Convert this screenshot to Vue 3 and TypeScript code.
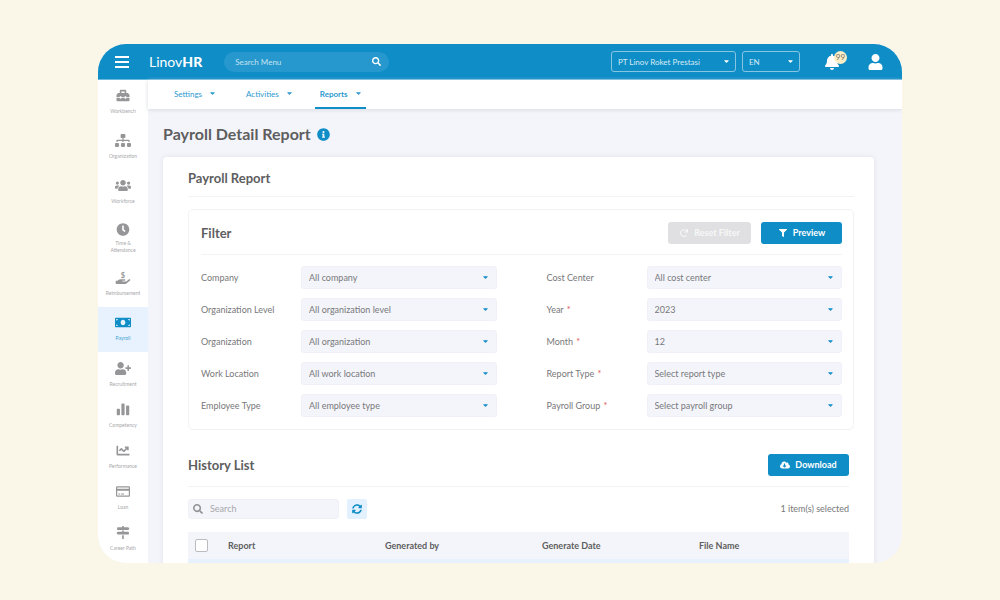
<script setup lang="ts">
import { ref } from 'vue'

interface Glyph {
  box: string
  d: string
}

interface MenuItem {
  label: string
  icon: string
  active?: boolean
  size?: 'tall' | 'compact'
}

interface Field {
  id: string
  label: string
  value: string
  required?: boolean
}

const glyphs: Record<string, Glyph> = {
  toolbox: {
    box: '0 0 512 512',
    d: 'M502.63 214.63l-45.25-45.25c-6-6-14.14-9.37-22.63-9.37H384V80c0-26.51-21.49-48-48-48H176c-26.51 0-48 21.49-48 48v80H77.25c-8.49 0-16.62 3.37-22.63 9.37L9.37 214.63c-6 6-9.37 14.14-9.37 22.63V320h128v-16c0-8.84 7.16-16 16-16h32c8.84 0 16 7.16 16 16v16h128v-16c0-8.84 7.16-16 16-16h32c8.84 0 16 7.16 16 16v16h128v-82.75c0-8.48-3.37-16.62-9.37-22.62zM320 160H192V96h128v64zm64 208c0 8.84-7.16 16-16 16h-32c-8.84 0-16-7.16-16-16v-16H192v16c0 8.84-7.16 16-16 16h-32c-8.84 0-16-7.16-16-16v-16H0v96c0 17.67 14.33 32 32 32h448c17.67 0 32-14.33 32-32v-96H384v16z',
  },
  sitemap: {
    box: '0 0 640 512',
    d: 'M128 352H32c-17.67 0-32 14.33-32 32v96c0 17.67 14.33 32 32 32h96c17.67 0 32-14.33 32-32v-96c0-17.67-14.33-32-32-32zm-24-80h192v48h48v-48h192v48h48v-57.59c0-21.17-17.23-38.41-38.41-38.41H344v-64h40c17.67 0 32-14.33 32-32V32c0-17.67-14.33-32-32-32H256c-17.67 0-32 14.33-32 32v96c0 17.67 14.33 32 32 32h40v64H94.41C73.23 224 56 241.23 56 262.41V320h48v-48zm264 80h-96c-17.67 0-32 14.33-32 32v96c0 17.67 14.33 32 32 32h96c17.67 0 32-14.33 32-32v-96c0-17.67-14.33-32-32-32zm240 0h-96c-17.67 0-32 14.33-32 32v96c0 17.67 14.33 32 32 32h96c17.67 0 32-14.33 32-32v-96c0-17.67-14.33-32-32-32z',
  },
  users: {
    box: '0 0 640 512',
    d: 'M96 224c35.3 0 64-28.7 64-64s-28.7-64-64-64-64 28.7-64 64 28.7 64 64 64zm448 0c35.3 0 64-28.7 64-64s-28.7-64-64-64-64 28.7-64 64 28.7 64 64 64zm32 32h-64c-17.6 0-33.5 7.1-45.1 18.6 40.3 22.1 68.9 62 75.1 109.4h66c17.7 0 32-14.3 32-32v-32c0-35.3-28.7-64-64-64zm-256 0c61.9 0 112-50.1 112-112S381.9 32 320 32 208 82.1 208 144s50.1 112 112 112zm76.8 32h-8.3c-20.8 10-43.9 16-68.5 16s-47.6-6-68.5-16h-8.3C179.6 288 128 339.6 128 403.2V432c0 26.5 21.5 48 48 48h288c26.5 0 48-21.5 48-48v-28.8c0-63.6-51.6-115.2-115.2-115.2zm-223.7-13.4C161.5 263.1 145.6 256 128 256H64c-35.3 0-64 28.7-64 64v32c0 17.7 14.3 32 32 32h65.9c6.3-47.4 34.9-87.3 75.2-109.4z',
  },
  clock: {
    box: '0 0 512 512',
    d: 'M256,8C119,8,8,119,8,256S119,504,256,504,504,393,504,256,393,8,256,8Zm92.49,313h0l-20,25a16,16,0,0,1-22.49,2.5h0l-67-49.72a40,40,0,0,1-15-31.23V112a16,16,0,0,1,16-16h32a16,16,0,0,1,16,16V256l58,42.5A16,16,0,0,1,348.49,321Z',
  },
  hand: {
    box: '0 0 576 512',
    d: 'M565.3 328.1c-11.8-10.7-30.2-10-42.6 0L430.3 402c-11.3 9.1-25.4 14-40 14H272c-8.8 0-16-7.2-16-16s7.2-16 16-16h78.3c15.9 0 30.7-10.9 33.3-26.6 3.3-20-12.1-37.4-31.6-37.4H192c-27 0-53.1 9.3-74.1 26.3L71.4 384H16c-8.8 0-16 7.2-16 16v96c0 8.8 7.2 16 16 16h356.8c14.5 0 28.6-4.9 40-14L564 377c15.2-12.1 16.4-35.3 1.3-48.9z',
  },
  money: {
    box: '0 0 640 512',
    d: 'M32 64H608a32 32 0 0 1 32 32V416a32 32 0 0 1-32 32H32a32 32 0 0 1-32-32V96a32 32 0 0 1 32-32zM320 144c-53 0-96 50-96 112s43 112 96 112 96-50 96-112-43-112-96-112zM48 176a64 64 0 0 0 64-64H48zM592 176v-64h-64a64 64 0 0 0 64 64zM48 336v64h64a64 64 0 0 0-64-64zM592 336a64 64 0 0 0-64 64h64z',
  },
  userPlus: {
    box: '0 0 640 512',
    d: 'M624 208h-64v-64c0-8.8-7.2-16-16-16h-32c-8.8 0-16 7.2-16 16v64h-64c-8.8 0-16 7.2-16 16v32c0 8.8 7.2 16 16 16h64v64c0 8.8 7.2 16 16 16h32c8.8 0 16-7.2 16-16v-64h64c8.8 0 16-7.2 16-16v-32c0-8.8-7.2-16-16-16zm-400 48c70.7 0 128-57.3 128-128S294.7 0 224 0 96 57.3 96 128s57.3 128 128 128zm89.6 32h-16.7c-22.2 10.2-46.9 16-72.9 16s-50.6-5.8-72.9-16h-16.7C60.2 288 0 348.2 0 422.4V464c0 26.5 21.5 48 48 48h352c26.5 0 48-21.5 48-48v-41.6c0-74.2-60.2-134.4-134.4-134.4z',
  },
  bars3: {
    box: '0 0 512 512',
    d: 'M40 224h66a30 30 0 0 1 30 30v196a30 30 0 0 1-30 30H40a30 30 0 0 1-30-30V254a30 30 0 0 1 30-30zM223 16h66a30 30 0 0 1 30 30v404a30 30 0 0 1-30 30h-66a30 30 0 0 1-30-30V46a30 30 0 0 1 30-30zM406 96h66a30 30 0 0 1 30 30v324a30 30 0 0 1-30 30h-66a30 30 0 0 1-30-30V126a30 30 0 0 1 30-30z',
  },
  chart: {
    box: '0 0 512 512',
    d: 'M496 384H64V80c0-8.84-7.16-16-16-16H16C7.16 64 0 71.16 0 80v336c0 17.67 14.33 32 32 32h464c8.84 0 16-7.16 16-16v-32c0-8.84-7.16-16-16-16zM464 96H345.94c-21.38 0-32.09 25.85-16.97 40.97l32.4 32.4L288 242.75l-73.37-73.37c-12.5-12.5-32.76-12.5-45.25 0l-68.69 68.69c-6.25 6.25-6.25 16.38 0 22.63l22.62 22.62c6.25 6.25 16.38 6.25 22.63 0L192 237.25l73.37 73.37c12.5 12.5 32.76 12.5 45.25 0l96-96 32.4 32.4c15.12 15.12 40.97 4.41 40.97-16.97V112c.01-8.84-7.15-16-15.99-16z',
  },
  card: {
    box: '0 0 640 512',
    d: 'M88 48H552a48 48 0 0 1 48 48V416a48 48 0 0 1-48 48H88a48 48 0 0 1-48-48V96a48 48 0 0 1 48-48zM88 96v48H552V96zM88 224V416H552V224zM136 336h72v40h-72zM244 336h120v40H244z',
  },
  signs: {
    box: '0 0 512 512',
    d: 'M224 0h64v48h176l48 56-48 56H48a24 24 0 0 1-24-24V72a24 24 0 0 1 24-24h176zM224 176h64v48h176a24 24 0 0 1 24 24v64a24 24 0 0 1-24 24H48l-48-56 48-56h176zM224 360h64v128a24 24 0 0 1-24 24h-16a24 24 0 0 1-24-24z',
  },
  search: {
    box: '0 0 512 512',
    d: 'M505 442.7L405.3 343c-4.5-4.5-10.6-7-17-7H372c27.6-35.3 44-79.7 44-128C416 93.1 322.9 0 208 0S0 93.1 0 208s93.1 208 208 208c48.3 0 92.7-16.4 128-44v16.3c0 6.4 2.5 12.5 7 17l99.7 99.7c9.4 9.4 24.6 9.4 33.9 0l28.3-28.3c9.4-9.4 9.4-24.6.1-34zM208 336c-70.7 0-128-57.2-128-128 0-70.7 57.2-128 128-128 70.7 0 128 57.2 128 128 0 70.7-57.2 128-128 128z',
  },
  bell: {
    box: '0 0 448 512',
    d: 'M224 512c35.32 0 63.97-28.65 63.97-64H160.03c0 35.35 28.65 64 63.97 64zm215.39-149.71c-19.32-20.76-55.47-51.99-55.47-154.29 0-77.7-54.48-139.9-127.94-155.16V32c0-17.67-14.32-32-31.98-32s-31.98 14.33-31.98 32v20.84C118.56 68.1 64.08 130.3 64.08 208c0 102.3-36.15 133.53-55.47 154.29-6 6.45-8.66 14.16-8.61 21.71.11 16.4 12.98 32 32.1 32h383.8c19.12 0 32-15.6 32.1-32 .05-7.55-2.61-15.27-8.61-21.71z',
  },
  user: {
    box: '0 0 448 512',
    d: 'M224 256c70.7 0 128-57.3 128-128S294.7 0 224 0 96 57.3 96 128s57.3 128 128 128zm89.6 32h-16.7c-22.2 10.2-46.9 16-72.9 16s-50.6-5.8-72.9-16h-16.7C60.2 288 0 348.2 0 422.4V464c0 26.5 21.5 48 48 48h352c26.5 0 48-21.5 48-48v-41.6c0-74.2-60.2-134.4-134.4-134.4z',
  },
  caret: {
    box: '0 180 320 192',
    d: 'M31.3 192h257.3c17.8 0 26.7 21.5 14.1 34.1L174.1 354.8c-7.8 7.8-20.5 7.8-28.3 0L17.2 226.1C4.6 213.5 13.5 192 31.3 192z',
  },
  filter: {
    box: '0 0 512 512',
    d: 'M487.976 0H24.028C2.71 0-8.047 25.866 7.058 40.971L192 225.941V432c0 7.831 3.821 15.17 10.237 19.662l80 55.98C298.02 518.69 320 507.493 320 487.98V225.941l184.947-184.97C520.021 25.896 509.338 0 487.976 0z',
  },
  redo: {
    box: '0 0 512 512',
    d: 'M500.33 0h-47.41a12 12 0 0 0-12 12.57l4 82.76A247.42 247.42 0 0 0 256 8C119.34 8 7.9 119.53 8 256.19 8.1 393.07 119.1 504 256 504a247.1 247.1 0 0 0 166.18-63.91 12 12 0 0 0 .48-17.43l-34-34a12 12 0 0 0-16.38-.55A176 176 0 1 1 402.1 157.8l-101.53-4.87a12 12 0 0 0-12.57 12v47.41a12 12 0 0 0 12 12h200.33a12 12 0 0 0 12-12V12a12 12 0 0 0-12-12z',
  },
  sync: {
    box: '0 0 512 512',
    d: 'M370.72 133.28C339.458 104.008 298.888 87.962 255.848 88c-77.458.068-144.328 53.178-162.791 126.85-1.344 5.363-6.122 9.15-11.651 9.15H24.103c-7.498 0-13.194-6.807-11.807-14.176C33.933 94.924 134.813 8 256 8c66.448 0 126.791 26.136 171.315 68.685L463.03 40.97C478.149 25.851 504 36.559 504 57.941V192c0 13.255-10.745 24-24 24H345.941c-21.382 0-32.09-25.851-16.971-40.971l41.75-41.749zM32 296h134.059c21.382 0 32.09 25.851 16.971 40.971l-41.75 41.75c31.262 29.273 71.835 45.319 114.876 45.28 77.418-.07 144.315-53.144 162.787-126.849 1.344-5.363 6.122-9.15 11.651-9.15h57.304c7.498 0 13.194 6.807 11.807 14.176C478.067 417.076 377.187 504 256 504c-66.448 0-126.791-26.136-171.315-68.685L48.97 471.03C33.851 486.149 8 475.441 8 454.059V320c0-13.255 10.745-24 24-24z',
  },
  cloud: {
    box: '0 0 640 512',
    d: 'M537.6 226.6c4.1-10.7 6.4-22.4 6.4-34.6 0-53-43-96-96-96-19.7 0-38.1 6-53.3 16.2C367 64.2 315.3 32 256 32c-88.4 0-160 71.6-160 160 0 2.7.1 5.4.2 8.1C40.2 219.8 0 273.2 0 336c0 79.5 64.5 144 144 144h368c70.7 0 128-57.3 128-128 0-61.9-44-113.6-102.4-125.4zm-132.9 88.7L299.3 420.7c-6.2 6.2-16.4 6.2-22.6 0L171.3 315.3c-10.1-10.1-2.9-27.3 11.3-27.3H248V176c0-8.8 7.2-16 16-16h48c8.8 0 16 7.2 16 16v112h65.4c14.2 0 21.4 17.2 11.3 27.3z',
  },
  info: {
    box: '0 0 512 512',
    d: 'M256 8C119.043 8 8 119.083 8 256c0 136.997 111.043 248 248 248s248-111.003 248-248C504 119.083 392.957 8 256 8zm0 110c23.196 0 42 18.804 42 42s-18.804 42-42 42-42-18.804-42-42 18.804-42 42-42zm56 254c0 6.627-5.373 12-12 12h-88c-6.627 0-12-5.373-12-12v-24c0-6.627 5.373-12 12-12h12v-64h-12c-6.627 0-12-5.373-12-12v-24c0-6.627 5.373-12 12-12h64c6.627 0 12 5.373 12 12v100h12c6.627 0 12 5.373 12 12v24z',
  },
}

const menu: MenuItem[] = [
  { label: 'Workbench', icon: 'toolbox' },
  { label: 'Organization', icon: 'sitemap' },
  { label: 'Workforce', icon: 'users' },
  { label: 'Time & Attendance', icon: 'clock', size: 'tall' },
  { label: 'Reimbursement', icon: 'hand' },
  { label: 'Payroll', icon: 'money', active: true },
  { label: 'Recruitment', icon: 'userPlus', size: 'compact' },
  { label: 'Competency', icon: 'bars3', size: 'compact' },
  { label: 'Performance', icon: 'chart', size: 'compact' },
  { label: 'Loan', icon: 'card', size: 'compact' },
  { label: 'Career Path', icon: 'signs', size: 'compact' },
]

const tabs = ['Settings', 'Activities', 'Reports']

const fields: Field[] = [
  { id: 'company', label: 'Company', value: 'All company' },
  { id: 'cost-center', label: 'Cost Center', value: 'All cost center' },
  { id: 'org-level', label: 'Organization Level', value: 'All organization level' },
  { id: 'year', label: 'Year', value: '2023', required: true },
  { id: 'organization', label: 'Organization', value: 'All organization' },
  { id: 'month', label: 'Month', value: '12', required: true },
  { id: 'location', label: 'Work Location', value: 'All work location' },
  { id: 'report-type', label: 'Report Type', value: 'Select report type', required: true },
  { id: 'employee-type', label: 'Employee Type', value: 'All employee type' },
  { id: 'payroll-group', label: 'Payroll Group', value: 'Select payroll group', required: true },
]

const columns = ['Report', 'Generated by', 'Generate Date', 'File Name']

const menuQuery = ref('')
const historyQuery = ref('')
const allSelected = ref(false)
</script>

<template>
  <div class="page">
    <div class="window">
      <header class="topbar">
        <button class="bare burger" type="button" aria-label="Toggle menu">
          <svg viewBox="0 0 14 12"><path d="M0 0h14v2H0zM0 5h14v2H0zM0 10h14v2H0z" /></svg>
        </button>
        <a class="brand" href="#">Linov<b>HR</b></a>
        <div class="menu-search">
          <input v-model="menuQuery" type="text" placeholder="Search Menu" aria-label="Search Menu" />
          <svg :viewBox="glyphs.search.box"><path :d="glyphs.search.d" /></svg>
        </div>
        <div class="picker tenant">
          <select aria-label="Company account"><option>PT Linov Roket Prestasi</option></select>
          <svg class="caret" :viewBox="glyphs.caret.box"><path :d="glyphs.caret.d" /></svg>
        </div>
        <div class="picker language">
          <select aria-label="Language"><option>EN</option></select>
          <svg class="caret" :viewBox="glyphs.caret.box"><path :d="glyphs.caret.d" /></svg>
        </div>
        <button class="bare bell" type="button" aria-label="Notifications">
          <svg :viewBox="glyphs.bell.box"><path :d="glyphs.bell.d" /></svg>
          <span class="badge">99</span>
        </button>
        <button class="bare account" type="button" aria-label="Account">
          <svg :viewBox="glyphs.user.box"><path :d="glyphs.user.d" /></svg>
        </button>
      </header>

      <div class="body">
        <nav class="sidebar" aria-label="Modules">
          <a
            v-for="item in menu"
            :key="item.label"
            href="#"
            class="module"
            :class="[item.size, { active: item.active }]"
          >
            <svg :viewBox="glyphs[item.icon].box">
              <path :d="glyphs[item.icon].d" fill-rule="evenodd" />
              <text v-if="item.icon === 'hand'" x="288" y="260" text-anchor="middle">$</text>
            </svg>
            <span>{{ item.label }}</span>
          </a>
        </nav>

        <div class="content">
          <nav class="tabs" aria-label="Payroll sections">
            <a v-for="tab in tabs" :key="tab" href="#" class="tab" :class="{ current: tab === 'Reports' }">
              {{ tab }}
              <svg class="caret" :viewBox="glyphs.caret.box"><path :d="glyphs.caret.d" /></svg>
            </a>
          </nav>

          <main class="main">
            <h1>
              Payroll Detail Report
              <svg :viewBox="glyphs.info.box"><path :d="glyphs.info.d" /></svg>
            </h1>

            <div class="card">
              <h2 class="card-title">Payroll Report</h2>

              <section class="filter">
                <div class="section-head">
                  <h2>Filter</h2>
                  <div class="actions">
                    <button class="btn" type="button" disabled>
                      <svg :viewBox="glyphs.redo.box"><path :d="glyphs.redo.d" /></svg>Reset Filter
                    </button>
                    <button class="btn" type="button">
                      <svg :viewBox="glyphs.filter.box"><path :d="glyphs.filter.d" /></svg>Preview
                    </button>
                  </div>
                </div>
                <div class="fields">
                  <div v-for="field in fields" :key="field.id" class="field">
                    <label :for="field.id">{{ field.label }} <i v-if="field.required">*</i></label>
                    <div class="picker">
                      <select :id="field.id"><option>{{ field.value }}</option></select>
                      <svg class="caret" :viewBox="glyphs.caret.box"><path :d="glyphs.caret.d" /></svg>
                    </div>
                  </div>
                </div>
              </section>

              <section class="history">
                <div class="section-head">
                  <h2>History List</h2>
                  <button class="btn" type="button">
                    <svg :viewBox="glyphs.cloud.box"><path :d="glyphs.cloud.d" /></svg>Download
                  </button>
                </div>
                <div class="tools">
                  <div class="list-search">
                    <svg :viewBox="glyphs.search.box"><path :d="glyphs.search.d" /></svg>
                    <input v-model="historyQuery" type="text" placeholder="Search" aria-label="Search history" />
                  </div>
                  <button class="bare refresh" type="button" aria-label="Refresh">
                    <svg :viewBox="glyphs.sync.box"><path :d="glyphs.sync.d" /></svg>
                  </button>
                  <span class="selected">1 item(s) selected</span>
                </div>
                <table>
                  <thead>
                    <tr>
                      <th class="tick"><input v-model="allSelected" type="checkbox" aria-label="Select all" /></th>
                      <th v-for="column in columns" :key="column">{{ column }}</th>
                    </tr>
                  </thead>
                  <tbody>
                    <tr><td colspan="5"></td></tr>
                  </tbody>
                </table>
              </section>
            </div>
          </main>
        </div>
      </div>
    </div>
  </div>
</template>

<style>
body {
  margin: 0;
}
</style>

<style scoped>
* {
  box-sizing: border-box;
}

.page {
  height: 100vh;
  padding: 44px 98px 37px;
  background: #fbf7e8;
  color: #5e5e60;
  font-family: Lato, 'Open Sans', sans-serif;
  font-size: 9px;
  line-height: 12px;
}

.window {
  display: flex;
  flex-direction: column;
  height: 100%;
  overflow: hidden;
  border-radius: 28px;
  background: #f4f5fa;
}

svg {
  display: block;
  flex: none;
  fill: currentColor;
}

a {
  color: inherit;
  text-decoration: none;
}

button,
input,
select {
  margin: 0;
  color: inherit;
  font: inherit;
}

h1,
h2 {
  margin: 0;
  font-weight: 700;
}

h2 {
  font-size: 13px;
  line-height: 18px;
}

.bare {
  display: grid;
  place-items: center;
  padding: 0;
  border: 0;
  background: none;
}

.topbar {
  display: flex;
  flex: none;
  align-items: center;
  height: 36px;
  padding: 0 19px 0 17px;
  border-bottom: 1px solid #68b8dd;
  background: #0f8dc7;
  color: #fff;
}

.burger svg {
  width: 14px;
  height: 12px;
}

.brand {
  margin-left: 20px;
  font-size: 14px;
  line-height: 18px;
}

.brand b {
  font-weight: 900;
}

.menu-search {
  display: flex;
  align-items: center;
  width: 165px;
  height: 20px;
  margin: 0 auto 0 22px;
  padding: 0 8px 0 11px;
  border-radius: 10px;
  background: #2798cd;
}

.menu-search input,
.list-search input {
  flex: 1;
  min-width: 0;
  padding: 0;
  border: 0;
  outline: 0;
  background: none;
}

.menu-search input {
  font-size: 8px;
}

.menu-search input::placeholder {
  color: #c5e3f2;
  opacity: 1;
}

.menu-search svg {
  width: 9px;
  height: 9px;
}

.picker {
  display: grid;
  grid-template-columns: 1fr auto;
  align-items: center;
}

.picker select {
  grid-area: 1 / 1 / 2 / 3;
  width: 100%;
  height: 23px;
  padding: 0 20px 0 7px;
  border: 1px solid #f0f1f6;
  border-radius: 3px;
  appearance: none;
  background: #f4f5fa;
}

.picker .caret {
  grid-area: 1 / 2;
  margin-right: 9px;
  color: #0f8dc7;
  pointer-events: none;
}

.caret {
  width: 5px;
  height: 3px;
}

.topbar .picker select {
  height: 21px;
  padding-left: 6px;
  border-color: #87c6e3;
  background: transparent;
  color: #d7ecf6;
  font-size: 8px;
}

.topbar .picker .caret {
  margin-right: 7px;
  color: #fff;
}

.tenant {
  width: 125px;
}

.language {
  width: 58px;
  margin-left: 6px;
}

.bell {
  position: relative;
  margin-left: 25px;
}

.bell svg {
  width: 14px;
  height: 16px;
}

.badge {
  position: absolute;
  top: -3px;
  left: 9px;
  width: 13px;
  height: 13px;
  border-radius: 7px;
  background: #fbeec6;
  color: #77736a;
  font-size: 8px;
  line-height: 13px;
  text-align: center;
}

.account {
  margin-left: 29px;
}

.account svg {
  width: 15px;
  height: 16px;
}

.body {
  display: flex;
  flex: 1;
  min-height: 0;
}

.sidebar {
  flex: none;
  width: 50px;
  background: #fff;
  color: #969698;
}

.module {
  display: flex;
  flex-direction: column;
  align-items: center;
  gap: 6px;
  height: 45px;
  padding: 9px 6px 0;
  font-size: 5px;
  line-height: 7px;
  text-align: center;
}

.module.tall {
  gap: 4px;
  height: 47px;
  padding: 8px 10px 0;
}

.module.compact {
  height: 41px;
  padding-top: 10px;
}

.module svg {
  width: 16px;
  height: 13px;
}

.module span {
  color: #a8a8ab;
}

.module text {
  font-size: 290px;
  font-weight: 700;
}

.module.active {
  background: #e8f2fe;
  color: #0f8dc7;
}

.module.active span {
  color: #3fa3d2;
}

.content {
  display: flex;
  flex: 1;
  flex-direction: column;
  min-width: 0;
}

.tabs {
  display: flex;
  flex: none;
  gap: 15px;
  height: 29px;
  padding-left: 18px;
  background: #fff;
  box-shadow: 0 1px 4px #d8dae2;
  color: #2b9acf;
  font-size: 8px;
}

.tab {
  display: flex;
  align-items: center;
  gap: 8px;
  padding: 0 8px;
  border-bottom: 2px solid transparent;
}

.tab.current {
  padding: 0 5px;
  border-color: #0f8dc7;
  font-weight: 700;
}

.main {
  flex: 1;
  min-height: 0;
  padding: 15px 28px 0 15px;
}

h1 {
  display: flex;
  align-items: center;
  gap: 6px;
  font-size: 16px;
  line-height: 20px;
}

h1 svg {
  width: 13px;
  height: 13px;
  color: #0f8dc7;
}

.card {
  min-height: 100%;
  margin-top: 13px;
  padding: 12px 20px 0 25px;
  border-radius: 4px;
  background: #fff;
  box-shadow: 0 0 5px #dfe1e9;
}

.card-title {
  padding-bottom: 9px;
  border-bottom: 1px solid #f3f3f5;
}

.filter {
  margin-top: 12px;
  padding: 12px 11px 12px 12px;
  border: 1px solid #f2f2f5;
  border-radius: 5px;
}

.section-head {
  display: flex;
  align-items: center;
  justify-content: space-between;
  padding-bottom: 10px;
  border-bottom: 1px solid #f3f3f5;
}

.actions {
  display: flex;
  gap: 10px;
}

.btn {
  display: flex;
  align-items: center;
  justify-content: center;
  gap: 5px;
  min-width: 81px;
  height: 22px;
  padding: 0 11px;
  border: 0;
  border-radius: 3px;
  background: #0f8dc7;
  color: #fff;
  font-weight: 700;
}

.btn svg {
  width: 10px;
  height: 8px;
}

.btn:disabled {
  min-width: 83px;
  background: #e0e0e2;
  color: #f7f7f8;
}

.fields {
  display: grid;
  grid-template-columns: 1fr 1fr;
  gap: 9px 50px;
  margin-top: 11px;
  color: #78787a;
}

.field {
  display: grid;
  grid-template-columns: 100px 1fr;
  align-items: center;
}

.field i {
  margin-left: 1px;
  color: #e0524f;
  font-style: normal;
}

.history {
  margin: 24px 5px 0 0;
}

.tools {
  display: flex;
  align-items: center;
  gap: 8px;
  margin-top: 12px;
}

.list-search {
  display: flex;
  align-items: center;
  gap: 7px;
  width: 151px;
  height: 20px;
  padding: 0 4px;
  border: 1px solid #f0f1f6;
  border-radius: 3px;
  background: #f4f5fa;
}

.list-search svg {
  width: 10px;
  height: 10px;
  color: #929295;
}

.list-search input::placeholder {
  color: #a7a7aa;
  opacity: 1;
}

.refresh {
  width: 20px;
  height: 20px;
  border-radius: 2px;
  background: #e3f0fd;
  color: #0f8dc7;
}

.refresh svg {
  width: 10px;
  height: 10px;
}

.selected {
  margin-left: auto;
  color: #78787a;
}

table {
  width: 100%;
  margin-top: 13px;
  border-collapse: collapse;
  table-layout: fixed;
}

th {
  height: 27px;
  padding: 0;
  background: #f4f5fa;
  font-weight: 700;
  text-align: left;
}

th:last-child {
  width: 150px;
}

.tick {
  width: 40px;
  padding-left: 7px;
}

.tick input {
  display: block;
  width: 13px;
  height: 13px;
  border: 1px solid #bbbcc0;
  border-radius: 2px;
  appearance: none;
  background: #fff;
}

.tick input:checked {
  background: #0f8dc7;
}

td {
  height: 32px;
  padding: 0;
  background: #e8f2fe;
}
</style>
